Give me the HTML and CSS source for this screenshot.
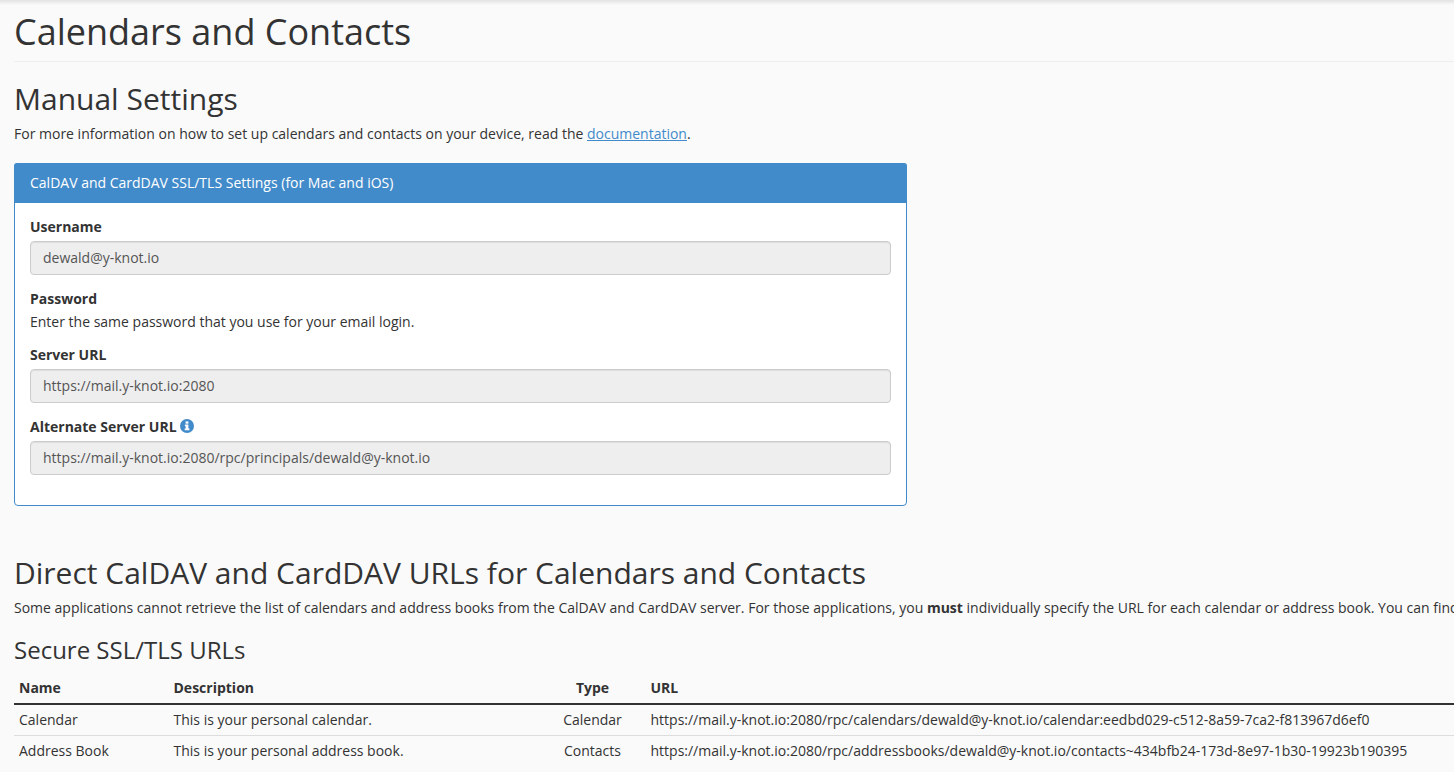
FILE: index.html
```html
<!DOCTYPE html>
<html lang="en">
<head>
  <meta charset="UTF-8" />
  <title>Calendars and Contacts</title>
  <link rel="stylesheet" href="styles.css">
</head>
<body>
  <div class="top-shadow"></div>
  <div class="content">
    <h1 class="page-title">Calendars and Contacts</h1>

    <h2 class="section-title">Manual Settings</h2>
    <p class="intro">For more information on how to set up calendars and contacts on your device, read the <a href="#">documentation</a>.</p>

    <div class="panel">
      <div class="panel-heading">CalDAV and CardDAV SSL/TLS Settings (for Mac and iOS)</div>
      <div class="panel-body">
        <div class="form-group">
          <label>Username</label>
          <input type="text" class="form-control" value="dewald@y-knot.io" readonly>
        </div>
        <div class="form-group">
          <label>Password</label>
          <div class="help">Enter the same password that you use for your email login.</div>
        </div>
        <div class="form-group">
          <label>Server URL</label>
          <input type="text" class="form-control" value="https://mail.y-knot.io:2080" readonly>
        </div>
        <div class="form-group">
          <label>Alternate Server URL
            <svg class="info-icon" viewBox="0 0 14 14" width="14" height="14">
              <circle cx="7" cy="7" r="7" fill="#428bca"/>
              <rect x="5.6" y="2.4" width="2.8" height="2.3" fill="#fff"/>
              <path d="M4.9 5.6h3.5v4h1v1.7H4.7V9.6h1V7.2h-.8z" fill="#fff"/>
            </svg>
          </label>
          <input type="text" class="form-control" value="https://mail.y-knot.io:2080/rpc/principals/dewald@y-knot.io" readonly>
        </div>
      </div>
    </div>

    <h2 class="section-title direct-title">Direct CalDAV and CardDAV URLs for Calendars and Contacts</h2>
    <p class="intro nowrap">Some applications cannot retrieve the list of calendars and address books from the CalDAV and CardDAV server. For those applications, you <strong>must</strong> individually specify the URL for each calendar or address book. You can find</p>

    <h3 class="sub-title">Secure SSL/TLS URLs</h3>
    <table class="url-table">
      <thead>
        <tr>
          <th class="col-name">Name</th>
          <th class="col-desc">Description</th>
          <th class="col-type">Type</th>
          <th>URL</th>
        </tr>
      </thead>
      <tbody>
        <tr>
          <td>Calendar</td>
          <td>This is your personal calendar.</td>
          <td class="col-type">Calendar</td>
          <td>https://mail.y-knot.io:2080/rpc/calendars/dewald@y-knot.io/calendar:eedbd029-c512-8a59-7ca2-f813967d6ef0</td>
        </tr>
        <tr>
          <td>Address Book</td>
          <td>This is your personal address book.</td>
          <td class="col-type">Contacts</td>
          <td>https://mail.y-knot.io:2080/rpc/addressbooks/dewald@y-knot.io/contacts~434bfb24-173d-8e97-1b30-19923b190395</td>
        </tr>
      </tbody>
    </table>
  </div>
</body>
</html>
```

FILE: styles.css
```css
html, body {
  height: 100%;
  overflow: hidden;
}

body {
  background: #fafafa;
  color: #333;
  font-family: 'Open Sans', sans-serif;
  font-size: 14px;
  line-height: 20px;
  margin: 0;
}

.top-shadow {
  height: 5px;
  margin-bottom: -5px;
  background: linear-gradient(#e2e2e2, #fafafa);
}

.content {
  padding-left: 14px;
}

.page-title {
  font-size: 36px;
  font-weight: 400;
  line-height: 40px;
  margin: 0 0 20px;
  padding: 12px 0 9px;
  border-bottom: 1px solid #eee;
}

.section-title {
  font-size: 30px;
  font-weight: 400;
  line-height: 33px;
  margin: 0 0 9px;
}

.intro {
  margin: 0 0 19px;
}

.nowrap {
  white-space: nowrap;
}

.intro a {
  color: #428bca;
}

.panel {
  width: 891px;
  background: #fff;
  border: 1px solid #428bca;
  border-radius: 4px;
  margin-bottom: 50px;
}

.panel-heading {
  background: #428bca;
  color: #fff;
  padding: 10px 16px;
  margin: -1px -1px 0;
  border-radius: 3px 3px 0 0;
}

.panel-body {
  padding: 14px 15px 16px;
}

.form-group {
  margin-bottom: 14px;
}

label {
  display: block;
  font-weight: 700;
  margin-bottom: 4px;
}

.help {
  margin: -1px 0;
}

.info-icon {
  vertical-align: -1px;
}

.form-control {
  display: block;
  box-sizing: border-box;
  width: 100%;
  height: 34px;
  padding: 5px 12px 7px;
  background: #eee;
  border: 1px solid #ccc;
  border-radius: 4px;
  box-shadow: inset 0 1px 1px rgba(0, 0, 0, 0.075);
  color: #555;
  font-family: inherit;
  font-size: 14px;
  outline: none;
}

.sub-title {
  font-size: 24px;
  font-weight: 400;
  line-height: 26px;
  margin: 0 0 10px;
}

.direct-title {
  margin-bottom: 9px;
}

.url-table {
  border-collapse: collapse;
  width: 1500px;
  table-layout: fixed;
}

.url-table th,
.url-table td {
  padding: 5px;
  text-align: left;
  white-space: nowrap;
}

.url-table th {
  font-weight: 700;
  border-bottom: 2px solid #333;
}

.url-table td {
  border-bottom: 1px solid #ddd;
}

.url-table tbody tr:last-child td {
  border-bottom: none;
}

.col-name {
  width: 144.5px;
}

.col-desc {
  width: 361px;
}

.url-table .col-type {
  width: 96px;
  text-align: center;
}
```
